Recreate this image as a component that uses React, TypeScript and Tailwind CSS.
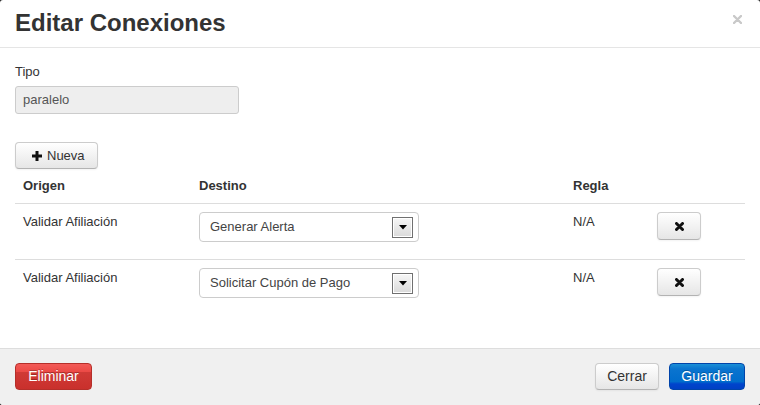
import React from "react";

const rows = [
  { origen: "Validar Afiliación", destino: "Generar Alerta", regla: "N/A" },
  { origen: "Validar Afiliación", destino: "Solicitar Cupón de Pago", regla: "N/A" },
];

function FakeSelect({ value }: { value: string }) {
  return (
    <div className="flex h-[30px] w-[220px] items-center justify-between rounded-[4px] border border-[#ccc] bg-white pl-[10px] pr-[5px]">
      <span className="text-[13px] leading-[20px] text-[#444]">{value}</span>
      <span className="flex h-[21px] w-[21px] items-center justify-center border border-[#707070] bg-[linear-gradient(#f6f6f6,#dadada)] shadow-[inset_0_0_0_1px_#fff]">
        <svg width="8" height="5" viewBox="0 0 8 5">
          <path d="M0 0h8L4 4.5z" fill="#000" />
        </svg>
      </span>
    </div>
  );
}

export default function App() {
  return (
    <div className="h-[405px] w-[760px] overflow-hidden bg-[#222] font-['Liberation_Sans',Arial,sans-serif] text-[#333]">
      <div className="flex h-full flex-col overflow-hidden rounded-[3px] bg-white">
        {/* header */}
        <div className="flex h-[48px] items-start justify-between border-b border-[#e5e5e5] pl-[15px] pr-[18px] pt-[8px]">
          <h3 className="text-[24px] font-bold leading-[30px] text-[#333]">Editar Conexiones</h3>
          <svg className="mt-[7px]" width="9" height="9" viewBox="0 0 9 9">
            <path d="M1 1l7 7M8 1L1 8" stroke="#c9c9c9" strokeWidth="2.4" strokeLinecap="round" />
          </svg>
        </div>

        {/* body */}
        <div className="flex-1 px-[15px] pt-[14px]">
          <label className="block text-[13px] leading-[20px]">Tipo</label>
          <div className="mt-[4px] flex h-[28px] w-[224px] items-center rounded-[3px] border border-[#ccc] bg-[#eee] pl-[7px] text-[13px] text-[#555]">
            paralelo
          </div>

          <button className="mt-[28px] flex h-[27px] w-[83px] items-center rounded-[4px] border border-[#ccc] border-b-[#b3b3b3] bg-[linear-gradient(#ffffff,#e6e6e6)] pl-[15px] text-[13px] leading-[19px] text-[#333] shadow-[0_1px_2px_rgba(0,0,0,0.05)]">
            <svg width="12" height="12" viewBox="0 0 12 12" className="mr-[4px]">
              <path d="M6 1v10M1 6h10" stroke="#111" strokeWidth="3" />
            </svg>
            Nueva
          </button>

          <div className="w-[730px]">
            <div className="grid grid-cols-[176px_374px_84px_1fr] text-[13px] font-bold leading-[20px]">
              <div className="px-[8px] py-[7px]">Origen</div>
              <div className="px-[8px] py-[7px]">Destino</div>
              <div className="px-[8px] py-[7px]">Regla</div>
              <div className="px-[8px] py-[7px]"></div>
            </div>
            {rows.map((r, i) => (
              <div
                key={i}
                className="grid grid-cols-[176px_374px_84px_1fr] border-t border-[#ddd] text-[13px] leading-[20px]"
              >
                <div className="px-[8px] pt-[8px]">{r.origen}</div>
                <div className="px-[8px] pb-[17px] pt-[8px]">
                  <FakeSelect value={r.destino} />
                </div>
                <div className="px-[8px] pt-[8px]">{r.regla}</div>
                <div className="px-[8px] pt-[8px]">
                  <button className="flex h-[28px] w-[44px] items-center justify-center rounded-[4px] border border-[#ccc] border-b-[#b3b3b3] bg-[linear-gradient(#ffffff,#e6e6e6)] shadow-[0_1px_2px_rgba(0,0,0,0.05)]">
                    <svg width="9" height="9" viewBox="0 0 9 9">
                      <path d="M1.5 1.5l6 6M7.5 1.5l-6 6" stroke="#111" strokeWidth="3" strokeLinecap="round" />
                    </svg>
                  </button>
                </div>
              </div>
            ))}
          </div>
        </div>

        {/* footer */}
        <div className="flex items-start justify-between border-t border-[#ddd] bg-[#f0f0f0] px-[15px] pb-[15px] pt-[14px]">
          <button className="h-[27px] w-[77px] rounded-[4px] border border-[#b52f2a] bg-[linear-gradient(#f25a57_0%,#ec4a46_30%,#d36b3a_31%,#d03a36_34%,#c9302c_100%)] text-[14px] leading-[19px] text-white [text-shadow:0_-1px_0_rgba(0,0,0,0.25)]">
            Eliminar
          </button>
          <div className="flex gap-[10px]">
            <button className="h-[27px] w-[64px] rounded-[4px] border border-[#ccc] border-b-[#b3b3b3] bg-[linear-gradient(#ffffff,#e6e6e6)] text-[14px] leading-[19px] text-[#333] shadow-[0_1px_2px_rgba(0,0,0,0.05)]">
              Cerrar
            </button>
            <button className="h-[27px] w-[76px] rounded-[4px] border border-[#0044aa] bg-[linear-gradient(#1a8fd6_0%,#0a74cf_20%,#006dcc_70%,#0044cc_80%,#0040c4_100%)] text-[14px] leading-[19px] text-white [text-shadow:0_-1px_0_rgba(0,0,0,0.25)]">
              Guardar
            </button>
          </div>
        </div>
      </div>
    </div>
  );
}
